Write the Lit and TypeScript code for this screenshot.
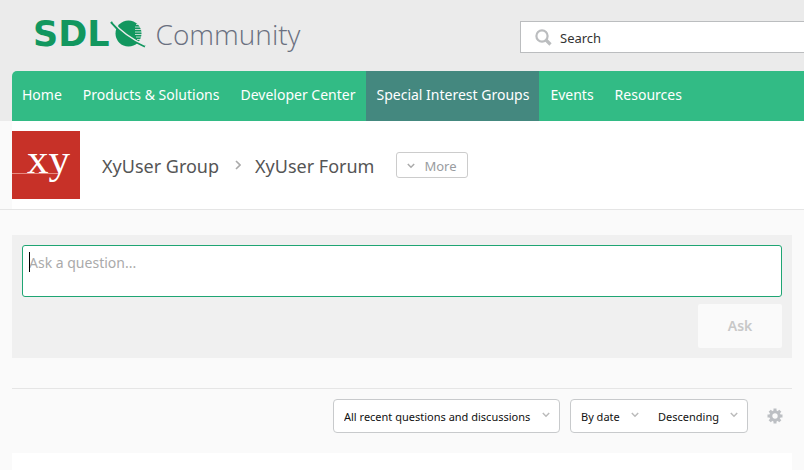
import { LitElement, html, css } from "lit";
import { customElement, state } from "lit/decorators.js";

const chevron = html`<svg class="chevron" viewBox="0 0 8 6" aria-hidden="true"><path d="M0.8 1 L4 4.2 L7.2 1" /></svg>`;

@customElement("site-header")
class SiteHeader extends LitElement {
  static styles = css`
    :host { display: block; background: #ebebeb; padding-left: 12px; }
    .top { display: flex; justify-content: space-between; align-items: flex-start; height: 71px; }
    .brand { display: flex; align-items: center; padding: 14px 0 0 21px; text-decoration: none; }
    .sdl { font: bold 35px/40px "DejaVu Sans", sans-serif; color: #12975f; }
    .globe { width: 36px; height: 30px; display: block; }
    .name { font: 300 28px/40px "Open Sans", sans-serif; color: #6a7080; margin-left: 10px; }
    .search { display: flex; align-items: center; gap: 8px; width: 284px; height: 32px; margin-top: 21px; padding-left: 14px; box-sizing: border-box; background: #fff; border: 1px solid #bbbdbf; border-right: 0; }
    .search svg { width: 17px; height: 17px; flex: none; }
    .search input { flex: 1; min-width: 0; border: 0; padding: 2px 0 0; outline: 0; background: none; font: 13px/20px "Noto Sans", sans-serif; color: #333; }
    .search input::placeholder { color: #333; opacity: 1; }
    nav { display: flex; gap: 1px; background: #32bb85; border-radius: 5px 0 0 0; overflow: hidden; }
    nav a { font: 14px/48px "Noto Sans", sans-serif; padding: 0 10px 2px; color: #fff; text-decoration: none; white-space: nowrap; }
    nav a.on { background: #44887f; }
  `;
  items = ["Home", "Products & Solutions", "Developer Center", "Special Interest Groups", "Events", "Resources"];
  render() {
    return html`
      <div class="top">
        <a class="brand" href="#">
          <span class="sdl">SDL</span>
          <svg class="globe" viewBox="0 0 36 30" aria-hidden="true">
            <circle cx="18.5" cy="14.5" r="13" fill="#12975f" />
            <path d="M26 5.5H33M25 8H34M25 10.5H34M25 13H34M25 15.5H34M26 18H34M27 20.5H34" stroke="#ebebeb" stroke-width="0.8" />
            <path d="M1 3 Q13 18 35 27.5" stroke="#12975f" stroke-width="2.2" fill="none" />
            <path d="M3 3 Q15 17.2 35 26.2" stroke="#ebebeb" stroke-width="1.3" fill="none" />
          </svg>
          <span class="name">Community</span>
        </a>
        <label class="search">
          <svg viewBox="0 0 17 17" fill="none" stroke="#bbbdbf" aria-hidden="true"><circle cx="7" cy="7" r="5.6" stroke-width="2.2" /><path d="M11 11 L15.5 15.5" stroke-width="3.2" /></svg>
          <input type="search" placeholder="Search" aria-label="Search" />
        </label>
      </div>
      <nav>${this.items.map((t) => html`<a href="#" class=${t.startsWith("Special") ? "on" : ""}>${t}</a>`)}</nav>
    `;
  }
}

@customElement("group-banner")
class GroupBanner extends LitElement {
  static styles = css`
    :host { display: flex; align-items: center; padding: 10px 12px; background: linear-gradient(to right, #fafafa 12px, #fff 12px); border-bottom: 1px solid #e5e5e5; font-family: "Noto Sans", sans-serif; }
    .tile { width: 68px; height: 68px; flex: none; display: block; }
    .tile text { font: 43px "Liberation Serif", serif; }
    .crumb { padding-top: 2px; font-size: 18px; line-height: 28px; color: #555; text-decoration: none; white-space: nowrap; }
    .first { margin-left: 22px; }
    .sep { width: 6px; height: 10px; margin: 0 14px 0 16px; fill: none; stroke: #aaa; stroke-width: 1.6; }
    .more { display: flex; align-items: center; gap: 9px; height: 26px; margin-left: 22px; padding: 2px 10px 0; border: 1px solid #ccc; border-radius: 3px; background: #fff; color: #999ca0; font: 13px/20px "Noto Sans", sans-serif; }
    .chevron { width: 8px; height: 6px; fill: none; stroke: #aaa; stroke-width: 1.5; }
  `;
  render() {
    return html`
      <svg class="tile" viewBox="0 0 68 68" role="img" aria-label="xy">
        <rect width="68" height="68" fill="#c73128" />
        <path d="M0 42.5H47" stroke="#e88a80" />
        <text x="15" y="42" fill="#fff">xy</text>
      </svg>
      <a class="crumb first" href="#">XyUser Group</a>
      <svg class="sep" viewBox="0 0 6 10" aria-hidden="true"><path d="M1 1 L5 5 L1 9" /></svg>
      <a class="crumb" href="#">XyUser Forum</a>
      <button class="more" type="button">${chevron}More</button>
    `;
  }
}

@customElement("ask-box")
class AskBox extends LitElement {
  static styles = css`
    :host { display: flex; flex-direction: column; gap: 7px; padding: 10px; background: #f0f0f0; }
    .field { position: relative; display: block; }
    textarea { display: block; box-sizing: border-box; width: 100%; height: 52px; padding: 6px; border: 1px solid #1fa573; border-radius: 3px; background: #fff; outline: 0; resize: none; font: 14px/22px "Noto Sans", sans-serif; color: #333; }
    textarea::placeholder { color: #aaa; opacity: 1; }
    .caret { position: absolute; left: 7px; top: 7px; width: 1px; height: 20px; background: #000; }
    button { align-self: flex-end; width: 84px; height: 44px; border: 0; border-radius: 2px; background: #fafafa; color: #c8c8c8; font: 600 14px/20px "Noto Sans", sans-serif; }
  `;
  @state() empty = true;
  render() {
    return html`
      <div class="field">
        <textarea placeholder="Ask a question..." aria-label="Ask a question" @input=${(e: Event) => (this.empty = !(e.target as HTMLTextAreaElement).value)}></textarea>
        ${this.empty ? html`<span class="caret"></span>` : null}
      </div>
      <button type="button" ?disabled=${this.empty}>Ask</button>
    `;
  }
}

@customElement("list-filters")
class ListFilters extends LitElement {
  static styles = css`
    :host { display: flex; justify-content: flex-end; align-items: center; gap: 10px; padding: 10px 9px 20px 0; border-top: 1px solid #e5e5e5; }
    .box { display: flex; height: 34px; box-sizing: border-box; border: 1px solid #c8cacc; border-radius: 4px; background: #fff; }
    .pick { display: grid; align-items: center; }
    select { grid-area: 1 / 1; appearance: none; border: 0; margin: 0; padding: 2px 28px 0 10px; height: 32px; background: none; color: #111; font: 11px/18px "Noto Sans", sans-serif; }
    .chevron { grid-area: 1 / 1; justify-self: end; margin: 0 9px 2px 0; width: 8px; height: 6px; fill: none; stroke: #bbb; stroke-width: 1.5; pointer-events: none; }
    .gear { margin-left: 9px; width: 16px; height: 16px; padding: 0; border: 0; background: none; }
    .gear svg { display: block; width: 16px; height: 16px; }
  `;
  pick(label: string, value: string) {
    return html`<span class="pick"><select aria-label=${label}><option>${value}</option></select>${chevron}</span>`;
  }
  render() {
    return html`
      <div class="box">${this.pick("Show", "All recent questions and discussions")}</div>
      <div class="box">${this.pick("Sort by", "By date")}${this.pick("Order", "Descending")}</div>
      <button class="gear" type="button" aria-label="Options">
        <svg viewBox="0 0 16 16" fill="none" stroke="#bcbfc3"><circle cx="8" cy="8" r="4.2" stroke-width="3" /><g stroke-width="3"><path d="M8 .5V3M8 13V15.5M.5 8H3M13 8H15.5M2.7 2.7L4.4 4.4M11.6 11.6L13.3 13.3M2.7 13.3L4.4 11.6M11.6 4.4L13.3 2.7" /></g></svg>
      </button>
    `;
  }
}

@customElement("app-root")
class AppRoot extends LitElement {
  static styles = css`
    :host { display: flex; flex-direction: column; min-height: 100vh; background: #fafafa; }
    main { flex: 1; display: flex; flex-direction: column; padding: 25px 12px 0; }
    list-filters { margin-top: 30px; }
    .results { flex: 1; background: #fff; }
  `;
  render() {
    return html`
      <site-header></site-header>
      <group-banner></group-banner>
      <main>
        <ask-box></ask-box>
        <list-filters></list-filters>
        <section class="results" aria-label="Results"></section>
      </main>
    `;
  }
}
